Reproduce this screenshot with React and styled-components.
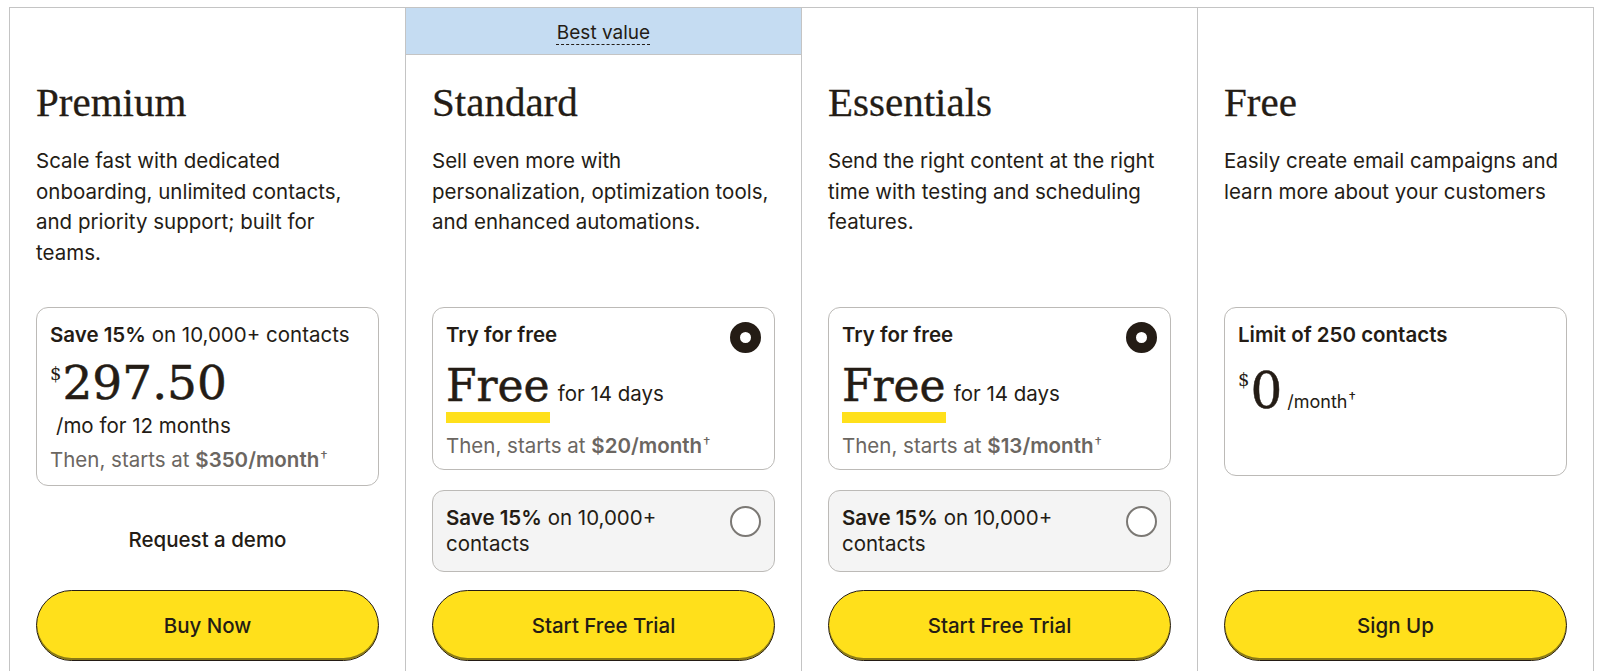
import React from 'react';
import styled, { createGlobalStyle } from 'styled-components';

const ink = '#241c15';
const line = '#c4c4c4';
const cardLine = '#bcbab7';
const muted = '#6b6661';
const yellow = '#ffe01b';

const GlobalStyle = createGlobalStyle`
  html, body {
    margin: 0;
    overflow: hidden;
    background: #ffffff;
  }
  body {
    font-family: "Inter", "Noto Sans", sans-serif;
    color: ${ink};
  }
`;

const Page = styled.div`
  padding: 7px 0 0 9px;
`;

const PlanGrid = styled.div`
  display: grid;
  grid-template-columns: 396px 396px 396px 397px;
`;

const Column = styled.section`
  display: flex;
  flex-direction: column;
  box-sizing: border-box;
  padding: 0 26px 30px;
  border-top: 1px solid ${line};
  border-left: 1px solid ${line};
  &:last-child {
    border-right: 1px solid ${line};
  }
`;

const Banner = styled.div`
  height: 47px;
  box-sizing: border-box;
  padding-top: 3px;
  margin: 0 -26px;
  display: flex;
  align-items: center;
  justify-content: center;
  font-size: 19px;
  background: ${p => (p.$show ? '#c5dcf2' : 'transparent')};
  border-bottom: 1px solid ${p => (p.$show ? line : 'transparent')};
`;

const BannerLabel = styled.span`
  text-decoration: underline dashed 1px;
  text-underline-offset: 5px;
`;

const PlanName = styled.h2`
  margin: 23px 0 0;
  font-family: "Liberation Serif", serif;
  font-weight: 400;
  font-size: 41px;
  line-height: 48px;
  -webkit-text-stroke: 0.3px ${ink};
`;

const Blurb = styled.p`
  margin: 20px 0 0;
  max-width: 341px;
  min-height: 122px;
  font-size: 20.5px;
  line-height: 30.5px;
`;

const Body = styled.div`
  flex: 1;
  display: flex;
  flex-direction: column;
  gap: 20px;
  margin-top: 39px;
`;

const Card = styled.div`
  box-sizing: border-box;
  min-height: ${p => p.$minHeight || 0}px;
  padding: ${p => (p.$compact ? '14px 13px 14px' : '13px 13px 9px')};
  border: 1px solid ${cardLine};
  border-radius: 12px;
  background: ${p => (p.$dim ? '#f4f4f4' : '#ffffff')};
`;

const CardHead = styled.div`
  display: flex;
  justify-content: space-between;
  align-items: flex-start;
  gap: 12px;
`;

const Label = styled.div`
  font-size: 20.5px;
  line-height: ${p => p.$lh || 28}px;
`;

const Strong = styled.span`
  font-weight: 600;
`;

const Radio = styled.span`
  flex: none;
  box-sizing: border-box;
  width: 31px;
  height: 31px;
  margin-top: 1px;
  border-radius: 50%;
  border: ${p => (p.$checked ? `10px solid ${ink}` : '2px solid #7b7874')};
  background: #ffffff;
`;

const PriceRow = styled.div`
  display: flex;
  align-items: baseline;
  margin-top: ${p => p.$gap}px;
`;

const Currency = styled.span`
  align-self: flex-start;
  margin-top: ${p => p.$offset}px;
  margin-right: 1px;
  font-family: "DejaVu Serif", serif;
  font-size: 18px;
  line-height: 18px;
`;

const Amount = styled.span`
  font-family: "DejaVu Serif", serif;
  font-size: ${p => p.$size}px;
  line-height: 52px;
  -webkit-text-stroke: 0.5px ${ink};
`;

const Highlight = styled.span`
  display: inline-block;
  font-family: "DejaVu Serif", serif;
  font-size: 44px;
  line-height: 44px;
  padding-bottom: 15px;
  -webkit-text-stroke: 0.5px ${ink};
  background: linear-gradient(${yellow}, ${yellow}) left bottom / 100% 11px no-repeat;
`;

const Suffix = styled.span`
  margin-left: ${p => p.$gap || 8}px;
  font-size: ${p => p.$size || 20.5}px;
`;

const Note = styled.div`
  margin-top: ${p => p.$gap || 0}px;
  margin-bottom: ${p => p.$after || 0}px;
  padding-left: ${p => p.$indent || 0}px;
  font-size: 20.5px;
  line-height: 28px;
  color: ${p => (p.$muted ? muted : ink)};
`;

const Dagger = styled.span`
  font-size: 15px;
  vertical-align: 5px;
  margin-left: 1px;
`;

const DemoRow = styled.div`
  flex: 1;
  display: flex;
  align-items: center;
  justify-content: center;
  padding-top: 1px;
  font-size: 20.5px;
  font-weight: 500;
`;

const ActionButton = styled.button`
  box-sizing: border-box;
  margin-top: 18px;
  height: 71px;
  width: 100%;
  border: 1px solid ${ink};
  border-radius: 36px;
  background: ${yellow};
  box-shadow: inset 0 -2px 0 #8a7a16;
  color: ${ink};
  font-family: "Inter", sans-serif;
  font-size: 20.5px;
  font-weight: 500;
  cursor: pointer;
`;

function ThenLine({ price, gap, after }) {
  return (
    <Note $muted $gap={gap} $after={after}>
      Then, starts at <Strong>{price}</Strong>
      <Dagger>†</Dagger>
    </Note>
  );
}

function TrialOptions({ price }) {
  return (
    <>
      <Card>
        <CardHead>
          <Label><Strong>Try for free</Strong></Label>
          <Radio $checked />
        </CardHead>
        <PriceRow $gap={11}>
          <Highlight>Free</Highlight>
          <Suffix>for 14 days</Suffix>
        </PriceRow>
        <ThenLine price={price} gap={6} />
      </Card>
      <Card $dim $compact>
        <CardHead>
          <Label $lh={26}>
            <Strong>Save 15%</Strong> on 10,000+ <span>contacts</span>
          </Label>
          <Radio />
        </CardHead>
      </Card>
    </>
  );
}

const plans = [
  {
    name: 'Premium',
    blurb: 'Scale fast with dedicated onboarding, unlimited contacts, and priority support; built for teams.',
    action: 'Buy Now',
    body: (
      <>
        <Card>
          <Label>
            <Strong>Save 15%</Strong> on 10,000+ contacts
          </Label>
          <PriceRow $gap={8}>
            <Currency $offset={8}>$</Currency>
            <Amount $size={47}>297.50</Amount>
          </PriceRow>
          <Note $indent={6} $gap={3}>/mo for 12 months</Note>
          <ThenLine price="$350/month" gap={3} after={2} />
        </Card>
        <DemoRow>Request a demo</DemoRow>
      </>
    ),
  },
  {
    name: 'Standard',
    featured: true,
    blurb: 'Sell even more with personalization, optimization tools, and enhanced automations.',
    action: 'Start Free Trial',
    body: <TrialOptions price="$20/month" />,
  },
  {
    name: 'Essentials',
    blurb: 'Send the right content at the right time with testing and scheduling features.',
    action: 'Start Free Trial',
    body: <TrialOptions price="$13/month" />,
  },
  {
    name: 'Free',
    blurb: 'Easily create email campaigns and learn more about your customers',
    action: 'Sign Up',
    body: (
      <Card $minHeight={169}>
        <Label><Strong>Limit of 250 contacts</Strong></Label>
        <PriceRow $gap={16}>
          <Currency $offset={6}>$</Currency>
          <Amount $size={50}>0</Amount>
          <Suffix $size={18} $gap={5}>
            /month<Dagger>†</Dagger>
          </Suffix>
        </PriceRow>
      </Card>
    ),
  },
];

export default function App() {
  return (
    <>
      <GlobalStyle />
      <Page>
        <PlanGrid>
          {plans.map(plan => (
            <Column key={plan.name}>
              <Banner $show={plan.featured}>
                {plan.featured && <BannerLabel>Best value</BannerLabel>}
              </Banner>
              <PlanName>{plan.name}</PlanName>
              <Blurb>{plan.blurb}</Blurb>
              <Body>{plan.body}</Body>
              <ActionButton>{plan.action}</ActionButton>
            </Column>
          ))}
        </PlanGrid>
      </Page>
    </>
  );
}
